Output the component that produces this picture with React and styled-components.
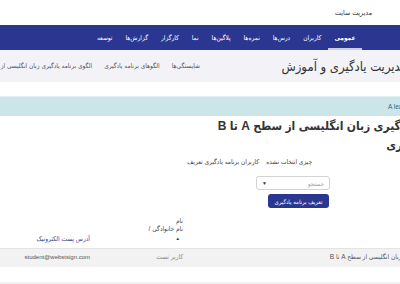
import React from 'react';
import styled, { createGlobalStyle } from 'styled-components';

const FONT = '"Liberation Sans", "DejaVu Sans Condensed", "DejaVu Sans", sans-serif';

const Global = createGlobalStyle`
  html, body { margin: 0; padding: 0; background: #fff; overflow: hidden; }
  body { font-family: ${FONT}; }
`;

const Page = styled.div`
  direction: rtl;
  width: 560px;
  margin-left: -40px;
  color: #333;
  font-family: ${FONT};
`;

const TopBar = styled.div`
  height: 25px;
  display: flex;
  align-items: center;
  padding-right: 148px;
  font-size: 7px;
  color: #333;
`;

const NavBar = styled.nav`
  height: 25px;
  background: #2a368f;
  display: flex;
  align-items: stretch;
  padding-right: 158px;
`;

const NavItem = styled.a`
  display: flex;
  align-items: center;
  padding: 0 6.5px;
  color: #fff;
  font-size: 6.5px;
  white-space: nowrap;
  font-weight: ${p => (p.$active ? 700 : 400)};
  border-top: 2px solid transparent;
  border-bottom: 2px solid ${p => (p.$active ? '#c9cde6' : 'transparent')};
`;

const HeaderArea = styled.header`
  height: 32px;
  background: #f3f3f7;
  display: grid;
  grid-template-columns: 207px 1fr;
  align-items: center;
  padding: 0 113px 0 15px;
  overflow: hidden;
`;

const Title = styled.h1`
  margin: 0;
  font-size: 13px;
  font-weight: 500;
  color: #333;
  white-space: nowrap;
`;

const Crumbs = styled.ol`
  display: flex;
  gap: 12px;
  list-style: none;
  margin: 0;
  padding: 0;
  font-size: 6.5px;
  color: #555;
  white-space: nowrap;
`;

const Alert = styled.div`
  margin-top: 14px;
  height: 19px;
  background: #cce5e8;
  border-top: 1px solid #dff0f2;
  direction: ltr;
  display: flex;
  align-items: center;
  padding-left: 428px;
  font-size: 6.5px;
  color: #2c6a73;
  white-space: nowrap;
  overflow: hidden;
`;

const Heading = styled.h2`
  margin: 1px 0 0;
  padding-right: 36px;
  font-size: 12px;
  line-height: 19px;
  font-weight: 600;
  color: #333;
  white-space: nowrap;
`;

const SelectionRow = styled.div`
  display: flex;
  gap: 7px;
  margin-top: 2px;
  padding-right: 208px;
  font-size: 6.5px;
  line-height: 10px;
  color: #444;
  white-space: nowrap;
`;

const FormColumn = styled.div`
  display: flex;
  flex-direction: column;
  align-items: flex-start;
  gap: 4px;
  margin-top: 9px;
  padding-right: 190px;
`;

const SearchBox = styled.div`
  width: 74px;
  height: 14px;
  box-sizing: border-box;
  border: 1px solid #d4d4d4;
  border-radius: 3px;
  display: flex;
  align-items: center;
  justify-content: space-between;
  padding: 0 5px;
  font-size: 6px;
  color: #9a9a9a;
`;

const Caret = styled.span`
  color: #333;
  font-size: 5px;
`;

const Button = styled.button`
  width: 61px;
  height: 14px;
  border: none;
  border-radius: 3px;
  background: #2a368f;
  color: #fff;
  font-family: inherit;
  font-size: 6px;
  padding: 0;
  margin-right: 1px;
`;

const Table = styled.div`
  margin-top: 0;
`;

const Row = styled.div`
  display: grid;
  grid-template-columns: 271px 93px 136px;
  align-items: ${p => (p.$head ? 'end' : 'center')};
  height: ${p => (p.$head ? '41px' : '18px')};
  box-sizing: border-box;
  padding-right: 60px;
  padding-bottom: ${p => (p.$head ? '5px' : '0')};
  background: ${p => (p.$head ? '#fff' : '#f2f2f2')};
  border-bottom: 1px solid ${p => (p.$head ? '#e4e4e4' : 'transparent')};
  font-size: 6.5px;
  line-height: 8.5px;
`;

const Cell = styled.div`
  padding-right: 6px;
  white-space: nowrap;
  font-size: ${p => p.$size || 'inherit'};
  color: ${p => p.$color || '#444'};
`;

const HeadLink = styled.span`
  display: flex;
  color: ${p => p.$color || '#444'};
`;

const SortArrow = styled.span`
  font-size: 4.5px;
  padding-right: 3px;
  color: #333;
`;

const Spacer = styled.div`
  height: 15px;
`;

const Footer = styled.div`
  height: 20px;
  background: #f2f2f4;
`;

export default function App() {
  const nav = ['عمومی', 'کاربران', 'درس‌ها', 'نمره‌ها', 'پلاگین‌ها', 'نما', 'کارگزار', 'گزارش‌ها', 'توسعه'];
  return (
    <>
      <Global />
      <Page>
        <TopBar>مدیریت سایت</TopBar>
        <NavBar>
          {nav.map((n, i) => (
            <NavItem key={n} $active={i === 0}>{n}</NavItem>
          ))}
        </NavBar>
        <HeaderArea>
          <Title>مدیریت یادگیری و آموزش</Title>
          <Crumbs>
            <li>شایستگی‌ها</li>
            <li>الگوهای برنامه یادگیری</li>
            <li>الگوی برنامه یادگیری زبان انگلیسی از سطح A تا B</li>
          </Crumbs>
        </HeaderArea>
        <Alert>A learning plan template was created</Alert>
        <Heading>
          الگوی برنامه یادگیری زبان انگلیسی از سطح A تا B
          <br />
          برنامه‌های یادگیری
        </Heading>
        <SelectionRow>
          <span>چیزی انتخاب نشده</span>
          <span>کاربران برنامه یادگیری تعریف</span>
        </SelectionRow>
        <FormColumn>
          <SearchBox>
            <span>جستجو</span>
            <Caret>▼</Caret>
          </SearchBox>
          <Button>تعریف برنامه یادگیری</Button>
        </FormColumn>
        <Table>
          <Row $head>
            <Cell />
            <Cell>
              <HeadLink>نام</HeadLink>
              <HeadLink>
                <span>نام خانوادگی</span>
                <span>&nbsp;/</span>
              </HeadLink>
              <SortArrow>▲</SortArrow>
            </Cell>
            <Cell>
              <HeadLink $color="#3b4599">آدرس پست الکترونیک</HeadLink>
            </Cell>
          </Row>
          <Row>
            <Cell $color="#555">الگوی برنامه یادگیری زبان انگلیسی از سطح A تا B</Cell>
            <Cell $color="#888">کاربر تست</Cell>
            <Cell $color="#555" $size="6px">student@webstsign.com</Cell>
          </Row>
        </Table>
        <Spacer />
        <Footer />
      </Page>
    </>
  );
}
